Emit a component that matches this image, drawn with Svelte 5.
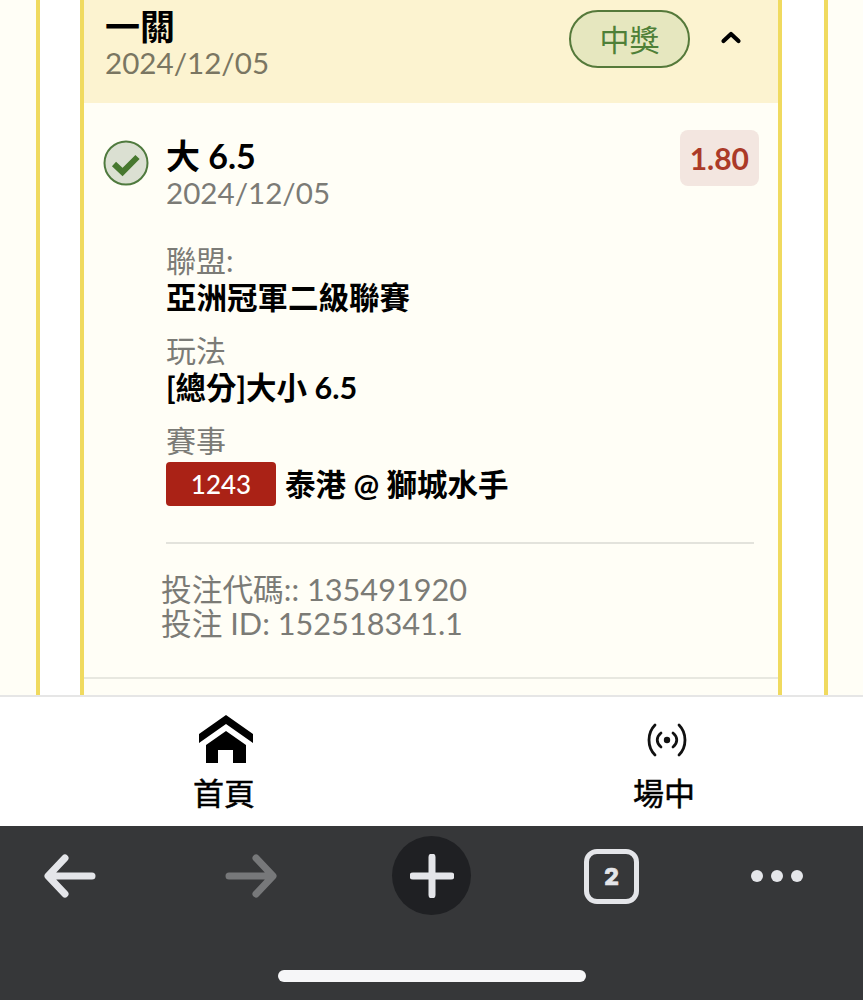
<script>
  const details = [
    { label: '聯盟:', value: '亞洲冠軍二級聯賽' },
    { label: '玩法', value: '[總分]大小 6.5' }
  ];
</script>

<div class="screen">
  <main class="content">
    <div class="outer">
      <section class="card">
        <header class="card-head">
          <div class="head-text">
            <div class="head-title">一關</div>
            <div class="head-date">2024/12/05</div>
          </div>
          <span class="pill">中獎</span>
          <svg class="chevron" width="22" height="14" viewBox="0 0 22 14" fill="none" stroke="#000" stroke-width="4.2" stroke-linecap="round" stroke-linejoin="round">
            <path d="M3.5 11 L11 4 L18.5 11" />
          </svg>
        </header>

        <div class="bet">
          <svg class="check" width="46" height="46" viewBox="0 0 46 46">
            <circle cx="23" cy="23" r="21.5" fill="#dbe0d2" stroke="#4f7a3e" stroke-width="2" />
            <path d="M11 24 L19.5 32 L34.5 17" fill="none" stroke="#47782f" stroke-width="6" stroke-linejoin="miter" />
          </svg>
          <div class="bet-main">
            <div class="bet-top">
              <div>
                <div class="bet-title">大 6.5</div>
                <div class="bet-date">2024/12/05</div>
              </div>
              <div class="odds">1.80</div>
            </div>

            {#each details as d}
              <div class="detail">
                <div class="detail-label">{d.label}</div>
                <div class="detail-value">{d.value}</div>
              </div>
            {/each}

            <div class="detail">
              <div class="detail-label">賽事</div>
              <div class="match">
                <span class="match-no">1243</span>
                <span class="detail-value">泰港 @ 獅城水手</span>
              </div>
            </div>

            <hr class="divider" />

            <div class="codes">
              <div>投注代碼:: 135491920</div>
              <div>投注 ID: 152518341.1</div>
            </div>
          </div>
        </div>

        <div class="next-row"></div>
      </section>
    </div>
  </main>

  <nav class="tabs">
    <div class="tab tab-home">
      <svg width="56" height="50" viewBox="0 0 56 50">
        <path d="M28 0 L55 19 V28 L28 9 L1 28 V19 Z" fill="#000" />
        <path d="M28 16 L48 30 V48 H35 V35 H20 V48 H8 V30 Z" fill="#000" />
      </svg>
      <span>首頁</span>
    </div>
    <div class="tab tab-live">
      <svg width="44" height="36" viewBox="0 0 44 36" fill="none" stroke="#111" stroke-width="2.8" stroke-linecap="round">
        <circle cx="22" cy="18" r="3.2" fill="#111" stroke="none" />
        <path d="M16 11 C11 15 11 21 16 25" />
        <path d="M28 11 C33 15 33 21 28 25" />
        <path d="M10 3 C2 11 2 25 10 33" />
        <path d="M34 3 C42 11 42 25 34 33" />
      </svg>
      <span>場中</span>
    </div>
  </nav>

  <footer class="browser">
    <div class="tools">
      <svg class="tool" width="52" height="44" viewBox="0 0 52 44" fill="none" stroke="#e4e5e9" stroke-width="7" stroke-linecap="round" stroke-linejoin="round">
        <path d="M48 22 H5 M21 4 L4 22 L21 40" />
      </svg>
      <svg class="tool" width="52" height="44" viewBox="0 0 52 44" fill="none" stroke="#77787a" stroke-width="7" stroke-linecap="round" stroke-linejoin="round">
        <path d="M4 22 H47 M31 4 L48 22 L31 40" />
      </svg>
      <div class="plus-btn">
        <svg width="44" height="44" viewBox="0 0 44 44" fill="none" stroke="#e4e5e9" stroke-width="7" stroke-linecap="round">
          <path d="M3 22 H41 M22 3 V41" />
        </svg>
      </div>
      <div class="tab-count">2</div>
      <div class="dots"><i></i><i></i><i></i></div>
    </div>
    <div class="home-bar"></div>
  </footer>
</div>

<style>
  :global(body) {
    margin: 0;
    background: #fff;
  }

  .screen {
    width: 863px;
    height: 1000px;
    display: flex;
    flex-direction: column;
    overflow: hidden;
    font-family: Lato, "Noto Sans CJK TC", sans-serif;
    color: #000;
  }

  .content {
    height: 695px;
    flex: none;
    overflow: hidden;
    background: #fffef6;
    padding: 0 35px 0 36px;
    box-sizing: border-box;
  }

  .outer {
    height: 100%;
    background: #fff;
    border-left: 4px solid #f0da5f;
    border-right: 4px solid #f0da5f;
    padding: 0 42px 0 40px;
  }

  .card {
    height: 100%;
    background: #fffef6;
    border-left: 4px solid #f0da5f;
    border-right: 4px solid #f0da5f;
  }

  .card-head {
    height: 103px;
    box-sizing: border-box;
    background: #fcf3d0;
    display: flex;
    align-items: flex-start;
    padding: 6px 36px 0 21px;
  }

  .head-text {
    flex: 1;
  }

  .head-title {
    font-size: 35px;
    line-height: 40px;
    font-weight: 700;
  }

  .head-date {
    font-size: 29.6px;
    line-height: 33px;
    color: #7a7662;
  }

  .pill {
    width: 121px;
    height: 58px;
    margin-top: 4px;
    box-sizing: border-box;
    border: 2px solid #55793a;
    border-radius: 29px;
    background: #e6e7bf;
    color: #4f8038;
    font-size: 30px;
    line-height: 54px;
    text-align: center;
  }

  .chevron {
    margin: 24px 0 0 30px;
  }

  .bet {
    display: flex;
    padding: 36px 19px 0 19px;
    height: 574px;
    box-sizing: border-box;
  }

  .check {
    flex: none;
    margin-right: 17px;
    margin-top: 1px;
  }

  .bet-main {
    flex: 1;
  }

  .bet-top {
    display: flex;
    justify-content: space-between;
    align-items: flex-start;
    margin-top: -9px;
    margin-bottom: 33px;
  }

  .bet-title {
    font-size: 34px;
    line-height: 40px;
    font-weight: 700;
    margin-top: 6px;
  }

  .bet-date {
    font-size: 29.6px;
    line-height: 33px;
    color: #7b7b76;
  }

  .odds {
    background: #f3e6e0;
    color: #ab3a28;
    font-size: 30px;
    font-weight: 700;
    line-height: 56px;
    padding: 0 10px;
    border-radius: 8px;
  }

  .detail {
    margin-bottom: 17px;
  }

  .detail-label {
    font-size: 30px;
    line-height: 37px;
    color: #7b7b76;
  }

  .detail-value {
    font-size: 30.5px;
    line-height: 36px;
    font-weight: 700;
    color: #000;
  }

  .match {
    display: flex;
    align-items: center;
    gap: 9px;
    margin-top: 3px;
  }

  .match-no {
    width: 110px;
    height: 44px;
    background: #aa2216;
    border-radius: 4px;
    color: #fff;
    font-size: 26px;
    font-weight: 500;
    line-height: 44px;
    text-align: center;
    flex: none;
  }

  .divider {
    border: none;
    border-top: 2px solid #e3e3dc;
    margin: 36px 5px 29px 0;
  }

  .codes {
    margin-left: -5px;
    font-size: 30.7px;
    line-height: 34px;
    color: #7b7b76;
  }

  .next-row {
    border-top: 2px solid #e8e8e0;
  }

  .tabs {
    flex: none;
    height: 131px;
    box-sizing: border-box;
    display: flex;
    background: #fff;
    border-top: 2px solid #e6e6e6;
  }

  .tab {
    flex: none;
    display: flex;
    flex-direction: column;
    align-items: center;
    font-size: 31px;
    line-height: 36px;
    font-weight: 400;
    -webkit-text-stroke: 0.5px #000;
  }

  .tab-home {
    width: 448px;
    padding-top: 18px;
  }

  .tab-home svg {
    margin: 0 0 10px 4px;
  }

  .tab-live {
    width: 432px;
    padding-top: 25px;
  }

  .tab-live svg {
    margin: 0 0 17px 5px;
  }

  .browser {
    flex: 1;
    background: #363739;
    display: flex;
    flex-direction: column;
    align-items: center;
  }

  .tools {
    width: 100%;
    height: 144px;
    flex: none;
    box-sizing: border-box;
    padding: 10px 0 0 44px;
    display: flex;
    align-items: flex-start;
  }

  .tool {
    margin-top: 18px;
  }

  .tool + .tool {
    margin-left: 129px;
  }

  .plus-btn {
    width: 79px;
    height: 79px;
    border-radius: 50%;
    background: #1f2023;
    margin-left: 115px;
    display: flex;
    align-items: center;
    justify-content: center;
  }

  .tab-count {
    width: 55px;
    height: 55px;
    box-sizing: border-box;
    margin: 13px 0 0 113px;
    border: 5px solid #e4e5e9;
    border-radius: 13px;
    color: #e4e5e9;
    font-family: Inter, sans-serif;
    font-size: 23px;
    font-weight: 800;
    -webkit-text-stroke: 0.7px #e4e5e9;
    line-height: 46px;
    text-align: center;
  }

  .dots {
    display: flex;
    gap: 8px;
    margin: 34px 0 0 112px;
  }

  .dots i {
    width: 12px;
    height: 12px;
    border-radius: 50%;
    background: #e4e5e9;
  }

  .home-bar {
    width: 308px;
    height: 12px;
    border-radius: 6px;
    background: #f6f6f8;
  }
</style>
